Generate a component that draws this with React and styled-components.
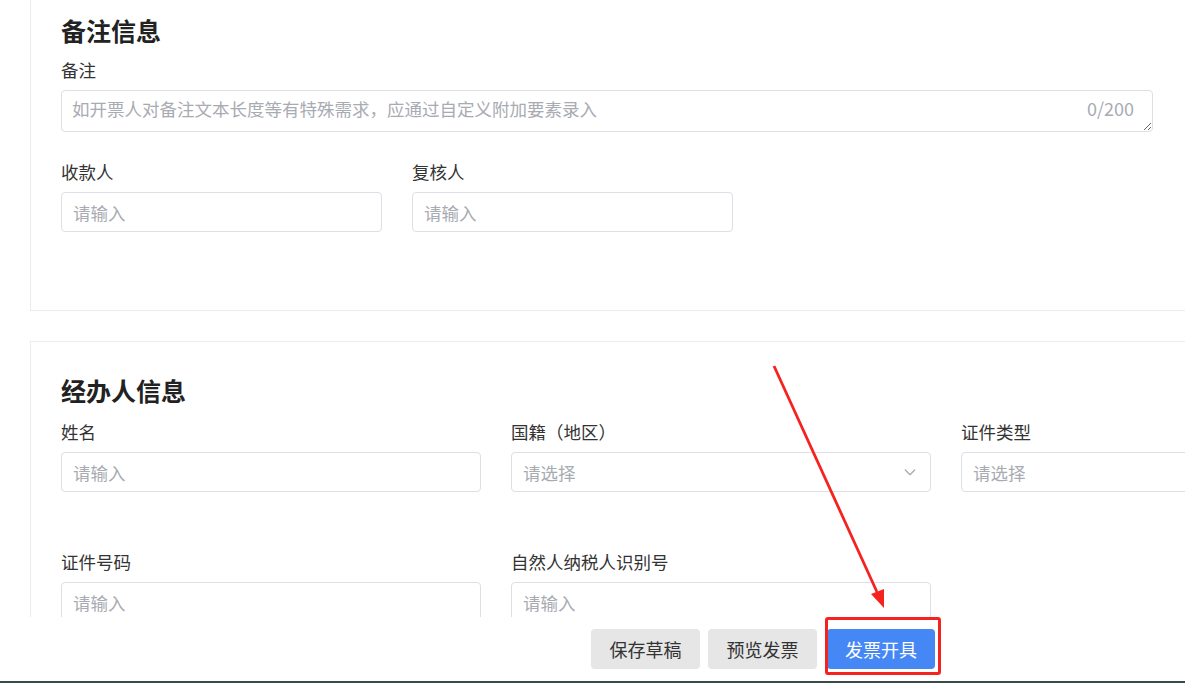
import styled, { createGlobalStyle } from 'styled-components';

const GlobalStyle = createGlobalStyle`
  html, body {
    margin: 0;
    padding: 0;
    background: #fff;
    overflow: hidden;
  }
  * {
    box-sizing: border-box;
  }
  body {
    font-family: "Noto Sans CJK SC", "Noto Sans", sans-serif;
    color: #333;
  }
`;

const Page = styled.div`
  position: relative;
  width: 1185px;
  height: 683px;
  display: flex;
  flex-direction: column;
  overflow: hidden;
  border-bottom: 2px solid #3a4b4c;
`;

const Main = styled.div`
  flex: 1;
  overflow: hidden;
  padding-left: 30px;
  display: flex;
  flex-direction: column;
  gap: 30px;
`;

const Panel = styled.section`
  flex-shrink: 0;
  width: 1400px;
  border: 1px solid #ececec;
  border-top: ${(p) => (p.$cut ? 'none' : '1px solid #ececec')};
  padding: ${(p) => p.$pad};
`;

const Title = styled.h2`
  margin: 0 0 ${(p) => p.$gap}px;
  font-size: 25px;
  line-height: 32px;
  font-weight: 700;
  color: #222;
`;

const Grid = styled.div`
  display: grid;
  grid-template-columns: repeat(3, ${(p) => p.$col}px);
  column-gap: 30px;
  row-gap: ${(p) => p.$row}px;
`;

const Field = styled.div`
  display: flex;
  flex-direction: column;
  gap: 8px;
`;

const Label = styled.label`
  font-size: 17.5px;
  line-height: 24px;
  color: #333;
`;

const Input = styled.input`
  height: 40px;
  width: 100%;
  border: 1px solid #dcdfe6;
  border-radius: 4px;
  padding: 0 11px;
  font-family: inherit;
  font-size: 17.5px;
  color: #333;
  outline: none;
  &::placeholder {
    color: #a8abb2;
  }
`;

const AreaWrap = styled.div`
  position: relative;
  width: 1092px;
  margin-bottom: 28px;
`;

const Area = styled.textarea`
  display: block;
  width: 100%;
  height: 42px;
  resize: vertical;
  border: 1px solid #dcdfe6;
  border-radius: 4px;
  padding: 4px 80px 0 10px;
  font-family: inherit;
  font-size: 17.5px;
  line-height: 28px;
  outline: none;
  &::placeholder {
    color: #a8abb2;
  }
`;

const Counter = styled.span`
  position: absolute;
  right: 19px;
  top: 4px;
  font-size: 18px;
  line-height: 28px;
  color: #a8abb2;
`;

const Select = styled.div`
  height: 40px;
  border: 1px solid #dcdfe6;
  border-radius: 4px;
  padding: 0 12px 0 11px;
  display: flex;
  align-items: center;
  justify-content: space-between;
  font-size: 17.5px;
  color: #a8abb2;
`;

const Footer = styled.footer`
  flex-shrink: 0;
  height: 64px;
  background: #fff;
  display: flex;
  align-items: center;
  gap: 8px;
  padding-left: 591px;
`;

const Button = styled.button`
  width: ${(p) => (p.$primary ? '108px' : '109px')};
  height: 40px;
  margin-left: ${(p) => (p.$primary ? '2px' : '0')};
  border: none;
  border-radius: 4px;
  background: ${(p) => (p.$primary ? '#4588f5' : '#e6e6e6')};
  color: ${(p) => (p.$primary ? '#fff' : '#333')};
  font-family: inherit;
  font-size: 18px;
`;

const Highlight = styled.div`
  position: absolute;
  left: 825px;
  top: 617px;
  width: 116px;
  height: 58px;
  border: 3px solid #f5231f;
  border-radius: 3px;
  pointer-events: none;
`;

const Arrow = styled.svg`
  position: absolute;
  left: 0;
  top: 0;
  pointer-events: none;
`;

const Chevron = () => (
  <svg width="16" height="16" viewBox="0 0 24 24" fill="none" stroke="#a8abb2" strokeWidth="2" strokeLinecap="round" strokeLinejoin="round">
    <path d="M5 9l7 7 7-7" />
  </svg>
);

export default function App() {
  return (
    <>
      <GlobalStyle />
      <Page>
        <Main>
          <Panel $cut $pad="14px 30px 78px">
            <Title $gap={12}>备注信息</Title>
            <Field>
              <Label>备注</Label>
              <AreaWrap>
                <Area placeholder="如开票人对备注文本长度等有特殊需求，应通过自定义附加要素录入" />
                <Counter>0/200</Counter>
              </AreaWrap>
            </Field>
            <Grid $col={321} $row={58}>
              <Field>
                <Label>收款人</Label>
                <Input placeholder="请输入" />
              </Field>
              <Field>
                <Label>复核人</Label>
                <Input placeholder="请输入" />
              </Field>
            </Grid>
          </Panel>
          <Panel $pad="32px 30px 40px">
            <Title $gap={14}>经办人信息</Title>
            <Grid $col={420} $row={58}>
              <Field>
                <Label>姓名</Label>
                <Input placeholder="请输入" />
              </Field>
              <Field>
                <Label>国籍（地区）</Label>
                <Select>
                  请选择
                  <Chevron />
                </Select>
              </Field>
              <Field>
                <Label>证件类型</Label>
                <Select>请选择</Select>
              </Field>
              <Field>
                <Label>证件号码</Label>
                <Input placeholder="请输入" />
              </Field>
              <Field>
                <Label>自然人纳税人识别号</Label>
                <Input placeholder="请输入" />
              </Field>
            </Grid>
          </Panel>
        </Main>
        <Footer>
          <Button>保存草稿</Button>
          <Button>预览发票</Button>
          <Button $primary>发票开具</Button>
        </Footer>
        <Highlight />
        <Arrow width="1185" height="683" viewBox="0 0 1185 683">
          <line x1="774" y1="366" x2="877" y2="592" stroke="#f5231f" strokeWidth="2.8" />
          <polygon points="884,608 871,594 884,589" fill="#f5231f" />
        </Arrow>
      </Page>
    </>
  );
}
